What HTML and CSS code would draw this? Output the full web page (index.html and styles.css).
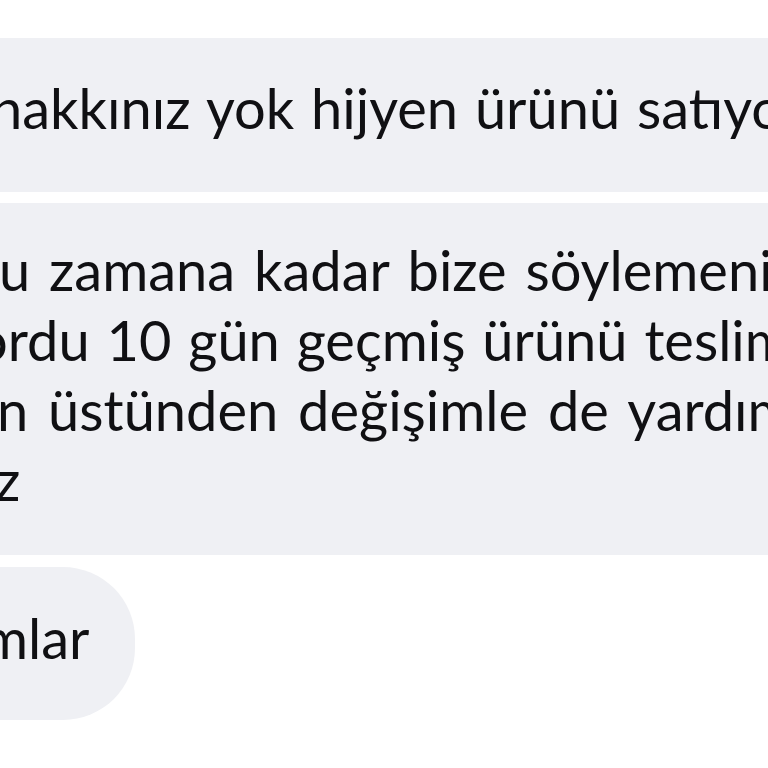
FILE: index.html
```html
<!DOCTYPE html>
<html lang="tr">
<head>
<meta charset="utf-8">
<link rel="stylesheet" href="styles.css">
</head>
<body>
<div class="chat">
  <div class="bubble b1"><p class="line l1">hakkınız yok hijyen ürünü satıyor</p></div>
  <div class="bubble b2">
    <p class="line l2">u zamana kadar bize söylemeniz</p>
    <p class="line l3">ordu 10 gün geçmiş ürünü teslim</p>
    <p class="line l4">n üstünden değişimle de yardımcı</p>
    <p class="line l5">z</p>
  </div>
  <div class="bubble b3"><p class="line l6">mlar</p></div>
</div>
</body>
</html>
```
FILE: styles.css
```css
html, body {
  margin: 0;
  padding: 0;
  background: #ffffff;
}
body {
  width: 768px;
  height: 768px;
  overflow: hidden;
  font-family: Lato, "Noto Sans", sans-serif;
  color: #101013;
}
.chat {
  display: flex;
  flex-direction: column;
  align-items: flex-start;
  padding-top: 38px;
  gap: 11px;
}
.bubble {
  background: #eff0f4;
  box-sizing: border-box;
  overflow: hidden;
}
.line {
  margin: 0;
  font-size: 56px;
  line-height: 70px;
  word-spacing: 2.5px;
  white-space: nowrap;
}
.l1 { text-indent: -9px; }
.l2 { text-indent: -1px; word-spacing: 4.5px; }
.l3 { text-indent: -24px; }
.l4 { text-indent: -3px; word-spacing: 5.5px; }
.l5 { text-indent: -5px; }
.l6 { text-indent: -18px; }
.b1 {
  width: 768px;
  padding: 35px 0 49px 0;
}
.b2 {
  width: 768px;
  padding: 32px 0 40px 0;
}
.b3 {
  margin-top: 1px;
  width: 135px;
  padding: 36px 0 47px 0;
  border-radius: 0 72px 72px 0;
}
```
